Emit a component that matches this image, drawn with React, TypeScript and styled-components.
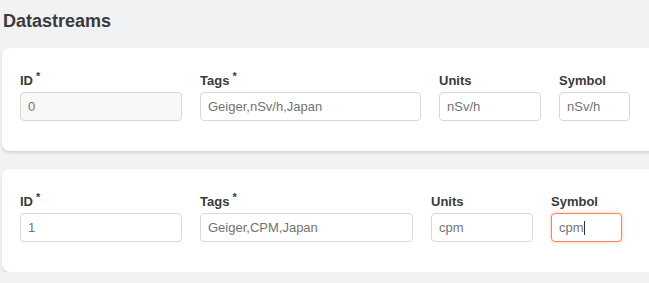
import React from "react";
import styled, { createGlobalStyle } from "styled-components";

const Global = createGlobalStyle`
  html, body {
    margin: 0;
    padding: 0;
    background: #f1f2f4;
    overflow: hidden;
  }
  body {
    font-family: "Liberation Sans", Arial, sans-serif;
  }
`;

const Page = styled.div`
  padding: 0 0 0 2px;
  width: 700px;
`;

const Title = styled.h2`
  margin: 0;
  padding: 11px 0 0 1px;
  height: 48px;
  box-sizing: border-box;
  font-size: 18px;
  line-height: 21px;
  font-weight: bold;
  color: #3a3a3a;
`;

const Stack = styled.div`
  display: flex;
  flex-direction: column;
  gap: 18px;
`;

const Card = styled.div`
  background: #fff;
  border-radius: 8px;
  box-shadow: 0 2px 3px rgba(0, 0, 0, 0.12);
  padding: 24px 18px 30px;
  display: flex;
  gap: 18px;
`;

const Field = styled.div<{ $width: number }>`
  display: flex;
  flex-direction: column;
  width: ${(p) => p.$width}px;
  flex: none;
`;

const Label = styled.label`
  font-size: 13px;
  line-height: 18px;
  font-weight: bold;
  color: #3a3a3a;
  margin-bottom: 2px;
  white-space: nowrap;
`;

const Req = styled.span`
  font-size: 11px;
  font-weight: bold;
  position: relative;
  top: -5px;
  margin-left: 3px;
`;

const InputWrap = styled.div`
  position: relative;
`;

const Input = styled.input<{ $focused?: boolean; $readonlyLook?: boolean }>`
  box-sizing: border-box;
  width: 100%;
  height: 29px;
  margin: 0;
  padding: 0 7px;
  font-family: "Liberation Sans", Arial, sans-serif;
  font-size: 13px;
  color: #737373;
  background: ${(p) => (p.$readonlyLook ? "#f8f8f8" : "#fff")};
  border: 1px solid ${(p) => (p.$focused ? "#f4845c" : "#d8d8d8")};
  border-radius: 4px;
  outline: none;
  box-shadow: ${(p) => (p.$focused ? "0 0 4px rgba(244, 132, 92, 0.45)" : "none")};
`;

const Caret = styled.span<{ $left: number }>`
  position: absolute;
  left: ${(p) => p.$left}px;
  top: 8px;
  width: 1px;
  height: 14px;
  background: #333;
`;

type Row = {
  id: string;
  tags: string;
  units: string;
  symbol: string;
  tagsWidth: number;
  idReadonly?: boolean;
  symbolFocused?: boolean;
};

const rows: Row[] = [
  { id: "0", tags: "Geiger,nSv/h,Japan", units: "nSv/h", symbol: "nSv/h", tagsWidth: 221, idReadonly: true },
  { id: "1", tags: "Geiger,CPM,Japan", units: "cpm", symbol: "cpm", tagsWidth: 213, symbolFocused: true },
];

export default function App() {
  return (
    <Page>
      <Global />
      <Title>Datastreams</Title>
      <Stack>
        {rows.map((r) => (
          <Card key={r.id}>
            <Field $width={162}>
              <Label>
                ID<Req>*</Req>
              </Label>
              <Input readOnly value={r.id} $readonlyLook={r.idReadonly} />
            </Field>
            <Field $width={r.tagsWidth}>
              <Label>
                Tags<Req>*</Req>
              </Label>
              <Input readOnly value={r.tags} />
            </Field>
            <Field $width={102}>
              <Label>Units</Label>
              <Input readOnly value={r.units} />
            </Field>
            <Field $width={71}>
              <Label>Symbol</Label>
              <InputWrap>
                <Input readOnly value={r.symbol} $focused={r.symbolFocused} />
                {r.symbolFocused && <Caret $left={33} />}
              </InputWrap>
            </Field>
          </Card>
        ))}
      </Stack>
    </Page>
  );
}
